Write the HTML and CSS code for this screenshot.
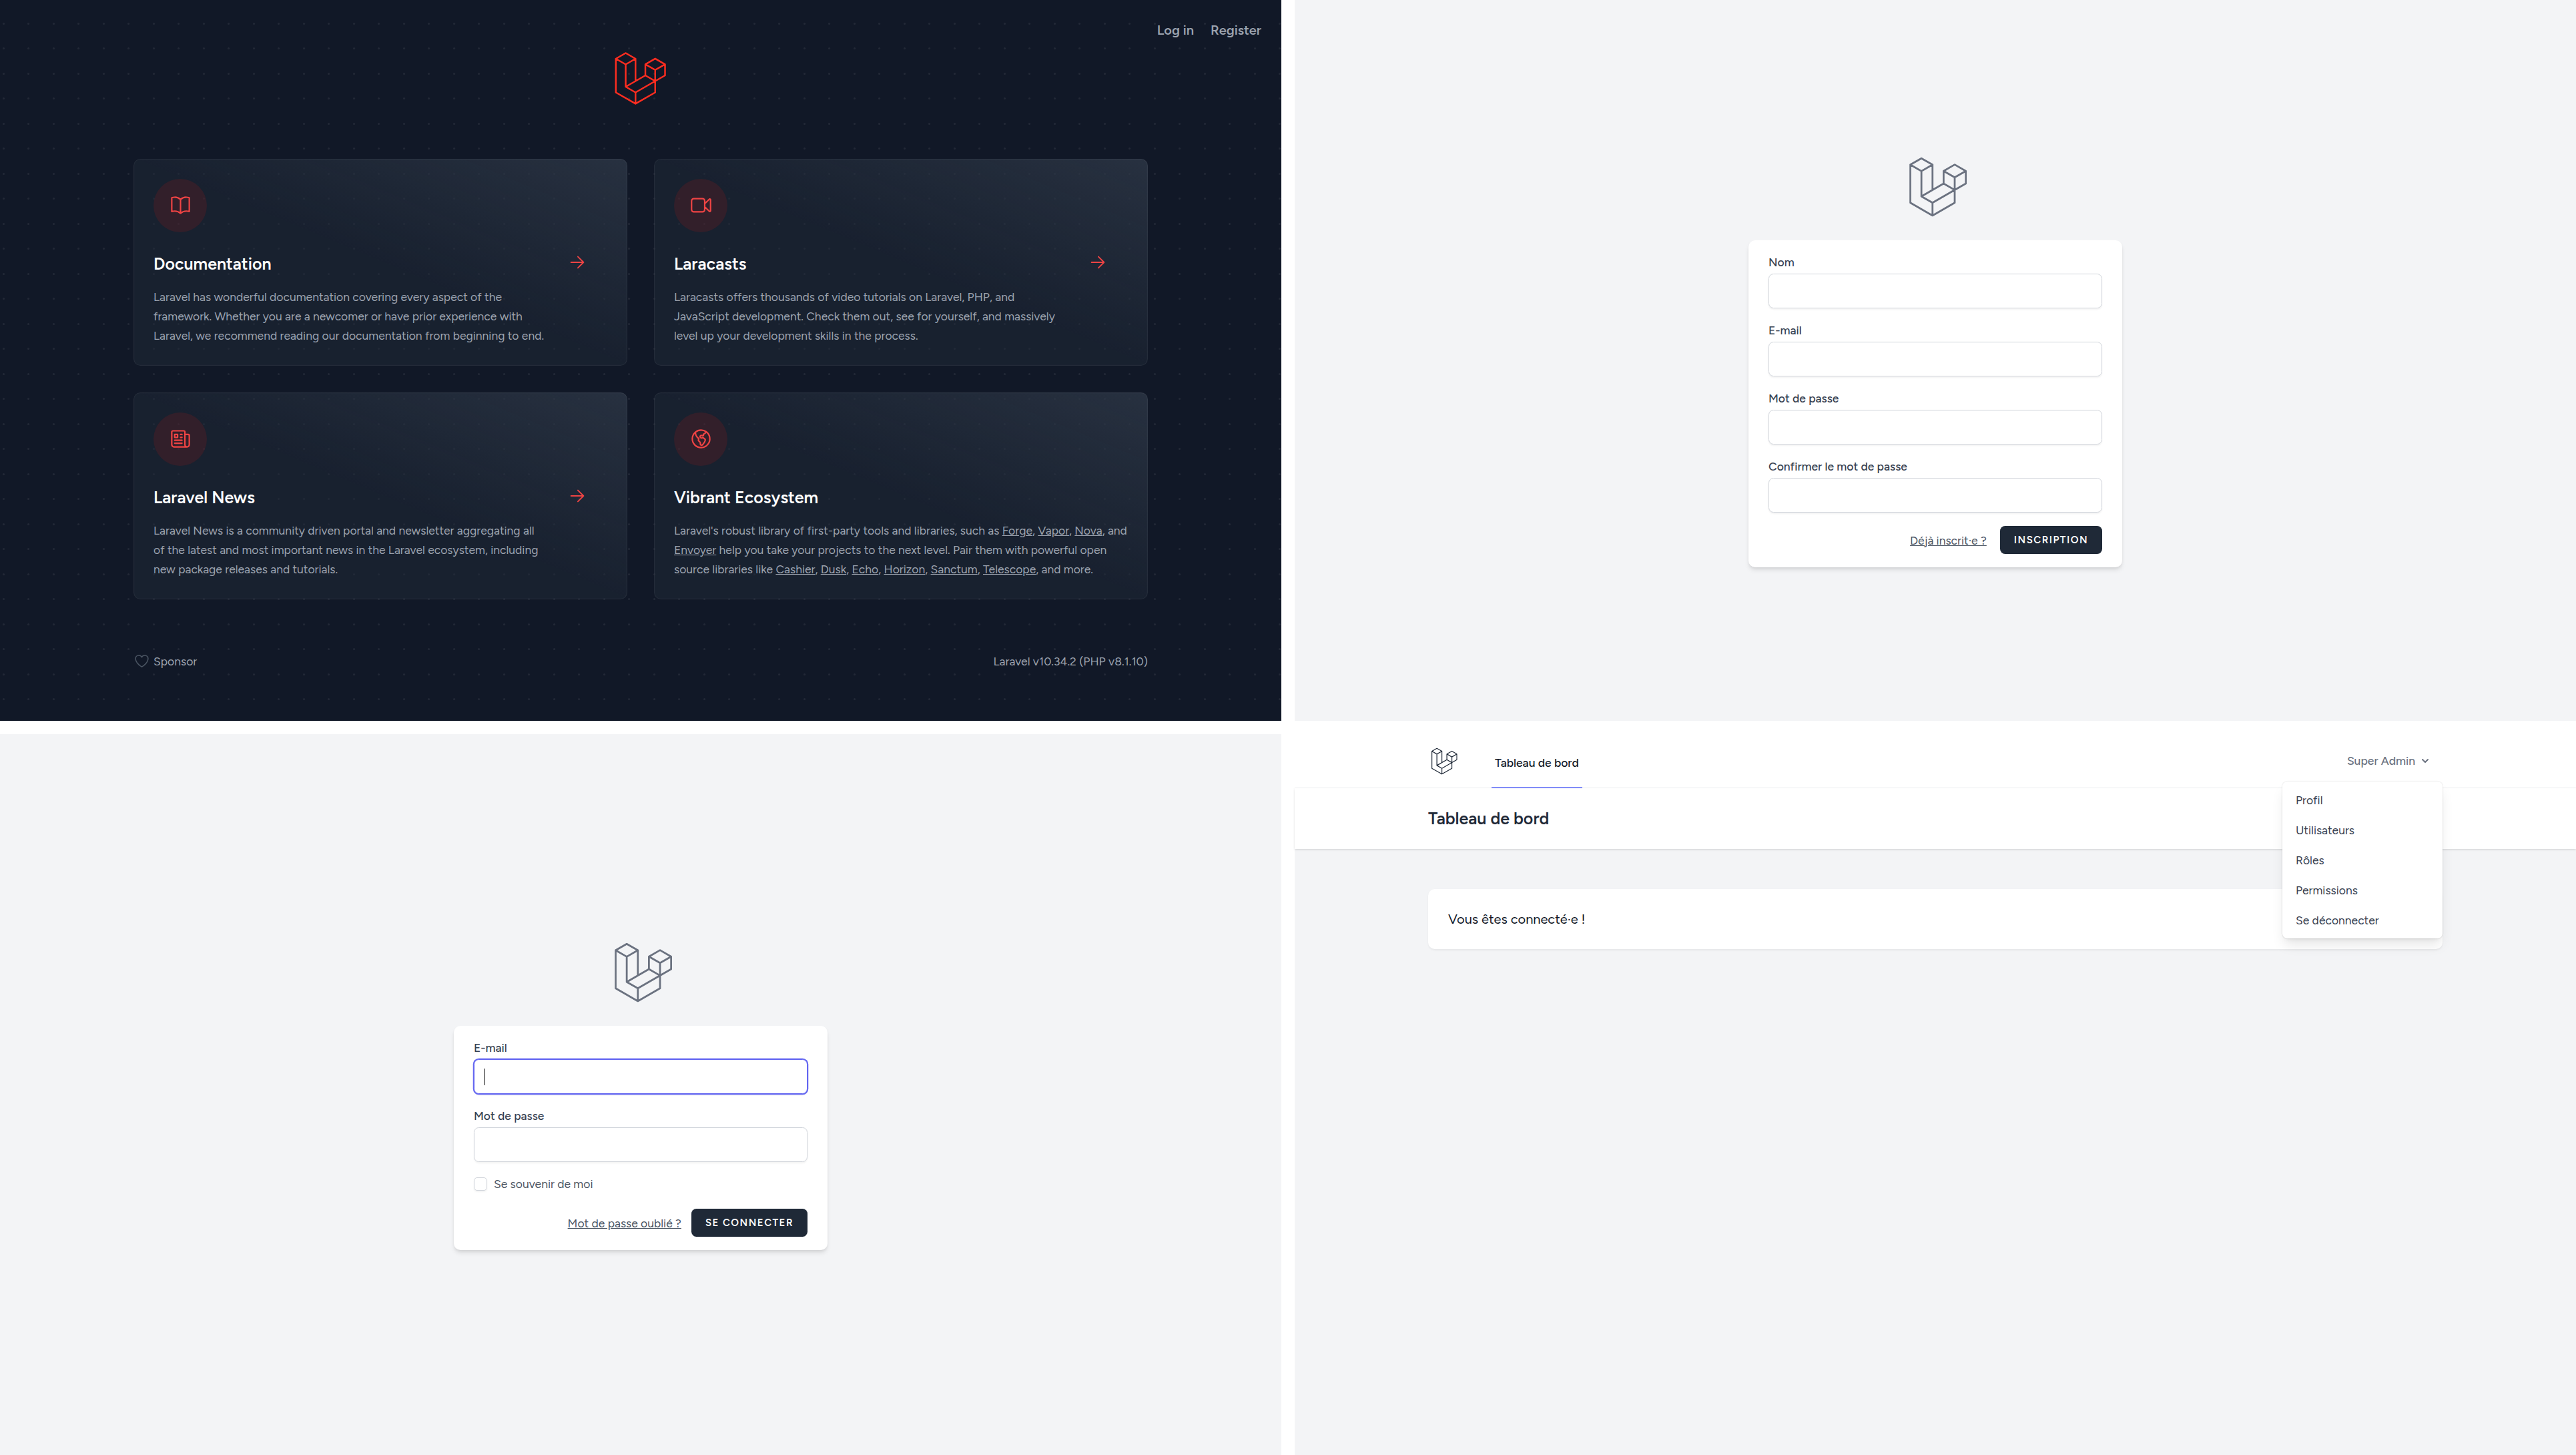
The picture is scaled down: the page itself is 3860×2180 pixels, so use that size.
FILE: index.html
```html
<!DOCTYPE html>
<html lang="fr">
<head>
  <meta charset="utf-8">
  <meta name="viewport" content="width=device-width, initial-scale=1">
  <title>Laravel</title>
  <link rel="stylesheet" href="styles.css">
</head>
<body>
  <svg class="sprite" aria-hidden="true">
    <symbol id="laravel" viewBox="0 0 62 65">
      <path fill="none" stroke="currentColor" stroke-width="2" stroke-linejoin="round" stroke-linecap="round" d="M1 8.11 12.98 1.21 24.95 8.11 12.98 15 1 8.11V49.13L24.95 62.92 48.9 49.13V21.8M12.98 15V42.24L24.95 49.13V62.92M24.95 8.11V35.35M12.98 42.24 36.92 28.45M24.95 49.13 60.88 28.45V14.89L48.9 8 36.92 14.89V28.45L48.9 35.35M36.92 14.89 48.9 21.78 60.88 14.89"/>
    </symbol>
  </svg>

  <div class="gallery">
    <section class="screen welcome">
      <nav class="welcome-nav">
        <a href="#login">Log in</a>
        <a href="#register">Register</a>
      </nav>
      <div class="welcome-inner">
        <svg class="welcome-logo" role="img" aria-label="Laravel"><use href="#laravel"/></svg>

        <div class="cards">
          <a class="card" href="#documentation">
            <div>
              <span class="card-icon"><svg viewBox="0 0 24 24"><path d="M12 6.042A8.967 8.967 0 006 3.75c-1.052 0-2.062.18-3 .512v14.25A8.987 8.987 0 016 18c2.305 0 4.408.867 6 2.292m0-14.25a8.966 8.966 0 016-2.292c1.052 0 2.062.18 3 .512v14.25A8.987 8.987 0 0018 18a8.967 8.967 0 00-6 2.292m0-14.25v14.25"/></svg></span>
              <h2>Documentation</h2>
              <p>Laravel has wonderful documentation covering every aspect of the framework. Whether you are a newcomer or have prior experience with Laravel, we recommend reading our documentation from beginning to end.</p>
            </div>
            <svg class="arrow" viewBox="0 0 24 24"><path d="M4.5 12h15m0 0l-6.75-6.75M19.5 12l-6.75 6.75"/></svg>
          </a>

          <a class="card" href="#laracasts">
            <div>
              <span class="card-icon"><svg viewBox="0 0 24 24"><path d="M15.75 10.5l4.72-4.72a.75.75 0 011.28.53v11.38a.75.75 0 01-1.28.53l-4.72-4.72M4.5 18.75h9a2.25 2.25 0 002.25-2.25v-9a2.25 2.25 0 00-2.25-2.25h-9A2.25 2.25 0 002.25 7.5v9a2.25 2.25 0 002.25 2.25z"/></svg></span>
              <h2>Laracasts</h2>
              <p>Laracasts offers thousands of video tutorials on Laravel, PHP, and JavaScript development. Check them out, see for yourself, and massively level up your development skills in the process.</p>
            </div>
            <svg class="arrow" viewBox="0 0 24 24"><path d="M4.5 12h15m0 0l-6.75-6.75M19.5 12l-6.75 6.75"/></svg>
          </a>

          <a class="card" href="#news">
            <div>
              <span class="card-icon"><svg viewBox="0 0 24 24"><path d="M12 7.5h1.5m-1.5 3h1.5m-7.5 3h7.5m-7.5 3h7.5m3-9h3.375c.621 0 1.125.504 1.125 1.125V18a2.25 2.25 0 01-2.25 2.25M16.5 7.5V18a2.25 2.25 0 002.25 2.25M16.5 7.5V4.875c0-.621-.504-1.125-1.125-1.125H4.125C3.504 3.75 3 4.254 3 4.875V18a2.25 2.25 0 002.25 2.25h13.5M6 7.5h3v3H6v-3z"/></svg></span>
              <h2>Laravel News</h2>
              <p>Laravel News is a community driven portal and newsletter aggregating all of the latest and most important news in the Laravel ecosystem, including new package releases and tutorials.</p>
            </div>
            <svg class="arrow" viewBox="0 0 24 24"><path d="M4.5 12h15m0 0l-6.75-6.75M19.5 12l-6.75 6.75"/></svg>
          </a>

          <div class="card">
            <div>
              <span class="card-icon"><svg viewBox="0 0 24 24"><path d="M6.115 5.19l.319 1.913A6 6 0 008.11 10.36L9.75 12l-.387.775c-.217.433-.132.956.21 1.298l1.348 1.348c.21.21.329.497.329.795v1.089c0 .426.24.815.622 1.006l.153.076c.433.217.956.132 1.298-.21l.723-.723a8.7 8.7 0 002.288-4.042 1.087 1.087 0 00-.358-1.099l-1.33-1.108c-.251-.21-.582-.299-.905-.245l-1.17.195a1.125 1.125 0 01-.98-.314l-.295-.295a1.125 1.125 0 010-1.591l.13-.132a1.125 1.125 0 011.3-.21l.603.302a.809.809 0 001.086-1.086L14.25 7.5l1.256-.837a4.5 4.5 0 001.528-1.732l.146-.292M6.115 5.19A9 9 0 1017.18 4.64M6.115 5.19A8.965 8.965 0 0112 3c1.929 0 3.716.607 5.18 1.64"/></svg></span>
              <h2>Vibrant Ecosystem</h2>
              <p>Laravel's robust library of first-party tools and libraries, such as <a href="#forge">Forge</a>, <a href="#vapor">Vapor</a>, <a href="#nova">Nova</a>, and <a href="#envoyer">Envoyer</a> help you take your projects to the next level. Pair them with powerful open source libraries like <a href="#cashier">Cashier</a>, <a href="#dusk">Dusk</a>, <a href="#echo">Echo</a>, <a href="#horizon">Horizon</a>, <a href="#sanctum">Sanctum</a>, <a href="#telescope">Telescope</a>, and more.</p>
            </div>
          </div>
        </div>

        <footer class="welcome-footer">
          <a class="sponsor" href="#sponsor">
            <svg viewBox="0 0 24 24"><path d="M21 8.25c0-2.485-2.099-4.5-4.688-4.5-1.935 0-3.597 1.126-4.312 2.733-.715-1.607-2.377-2.733-4.313-2.733C5.1 3.75 3 5.765 3 8.25c0 7.22 9 12 9 12s9-4.78 9-12z"/></svg>
            Sponsor
          </a>
          <span>Laravel v10.34.2 (PHP v8.1.10)</span>
        </footer>
      </div>
    </section>

    <section class="screen guest" id="register">
      <a class="guest-logo" href="#home" aria-label="Laravel"><svg viewBox="-8 -4 72 72"><use href="#laravel" width="62" height="65"/></svg></a>
      <form class="panel">
        <div class="field">
          <label for="name">Nom</label>
          <input id="name" type="text">
        </div>
        <div class="field">
          <label for="reg-email">E-mail</label>
          <input id="reg-email" type="email">
        </div>
        <div class="field">
          <label for="reg-password">Mot de passe</label>
          <input id="reg-password" type="password">
        </div>
        <div class="field">
          <label for="reg-confirm">Confirmer le mot de passe</label>
          <input id="reg-confirm" type="password">
        </div>
        <div class="actions">
          <a href="#login">Déjà inscrit·e ?</a>
          <button type="button">Inscription</button>
        </div>
      </form>
    </section>

    <section class="screen guest" id="login">
      <a class="guest-logo" href="#home" aria-label="Laravel"><svg viewBox="-8 -4 72 72"><use href="#laravel" width="62" height="65"/></svg></a>
      <form class="panel">
        <div class="field">
          <label for="email">E-mail</label>
          <input class="is-focused" id="email" type="email">
        </div>
        <div class="field">
          <label for="password">Mot de passe</label>
          <input id="password" type="password">
        </div>
        <div class="remember">
          <input id="remember" type="checkbox">
          <label for="remember">Se souvenir de moi</label>
        </div>
        <div class="actions actions-tight">
          <a href="#forgot">Mot de passe oublié ?</a>
          <button type="button">Se connecter</button>
        </div>
      </form>
    </section>

    <section class="screen dashboard">
      <nav class="app-nav">
        <div class="container app-nav-row">
          <a class="app-logo" href="#home" aria-label="Laravel"><svg viewBox="-8 -4 72 72"><use href="#laravel" width="62" height="65"/></svg></a>
          <a class="app-link" href="#dashboard">Tableau de bord</a>
          <div class="dropdown">
            <button class="dropdown-trigger" type="button" aria-expanded="true">
              Super Admin
              <svg viewBox="0 0 20 20"><path fill-rule="evenodd" d="M5.293 7.293a1 1 0 011.414 0L10 10.586l3.293-3.293a1 1 0 111.414 1.414l-4 4a1 1 0 01-1.414 0l-4-4a1 1 0 010-1.414z"/></svg>
            </button>
            <div class="dropdown-menu">
              <a href="#profile">Profil</a>
              <a href="#users">Utilisateurs</a>
              <a href="#roles">Rôles</a>
              <a href="#permissions">Permissions</a>
              <a href="#logout">Se déconnecter</a>
            </div>
          </div>
        </div>
      </nav>
      <header class="app-header">
        <h2 class="container">Tableau de bord</h2>
      </header>
      <main class="container app-main">
        <div class="notice">Vous êtes connecté·e !</div>
      </main>
    </section>
  </div>
</body>
</html>
```
FILE: styles.css
```css
*,
*::before,
*::after {
  box-sizing: border-box;
}

body {
  margin: 0;
  background: #fff;
  font-family: Figtree, Lato, sans-serif;
}

h2,
p {
  margin: 0;
}

a {
  color: inherit;
  text-decoration: none;
}

svg {
  display: block;
}

.sprite {
  position: absolute;
  width: 0;
  height: 0;
}

/* Four screens, two by two */
.gallery {
  display: grid;
  grid-template-columns: repeat(2, minmax(0, 1fr));
  grid-auto-rows: 1fr;
  gap: 20px;
  min-height: 100vh;
}

.screen {
  zoom: 1.25;
  position: relative;
  font-size: 16px;
  line-height: 24px;
}

/* Welcome */
.welcome {
  display: flex;
  align-items: center;
  justify-content: center;
  background-color: #111827;
  background-image: url("data:image/svg+xml,%3Csvg xmlns='http://www.w3.org/2000/svg' width='30' height='30' viewBox='0 0 30 30'%3E%3Ccircle cx='1.227' cy='1.227' r='1.227' fill='rgba(255,255,255,0.07)'/%3E%3C/svg%3E");
  background-position: center;
}

.welcome-nav {
  position: absolute;
  top: 0;
  right: 0;
  display: flex;
  gap: 20px;
  padding: 24px;
  color: #9ca3af;
  font-weight: 600;
}

.welcome-inner {
  width: 100%;
  max-width: 1280px;
  padding: 32px;
}

.welcome-logo {
  width: 62px;
  height: 64px;
  margin: 0 auto;
  color: #ff2d20;
}

.cards {
  display: grid;
  grid-template-columns: repeat(2, minmax(0, 1fr));
  gap: 32px;
  margin-top: 64px;
}

.card {
  display: flex;
  padding: 24px;
  border-radius: 8px;
  background-color: rgba(31, 41, 55, 0.5);
  background-image: linear-gradient(to bottom left, rgba(55, 65, 81, 0.5), transparent, transparent);
  box-shadow: inset 0 0 0 1px rgba(255, 255, 255, 0.05);
}

.card-icon {
  display: flex;
  align-items: center;
  justify-content: center;
  width: 64px;
  height: 64px;
  border-radius: 50%;
  background: rgba(153, 27, 27, 0.2);
}

.card-icon svg {
  width: 28px;
  height: 28px;
}

.card svg {
  fill: none;
  stroke: #ef4444;
  stroke-width: 1.5;
}

.card-icon path,
.arrow path,
.sponsor path {
  stroke-linecap: round;
  stroke-linejoin: round;
}

.card h2 {
  margin-top: 24px;
  color: #fff;
  font-size: 20px;
  font-weight: 600;
  line-height: 28px;
}

.card p {
  margin-top: 15px;
  color: #9ca3af;
  font-size: 14px;
  line-height: 23px;
}

.card p a {
  text-decoration: underline;
}

.arrow {
  flex-shrink: 0;
  align-self: center;
  width: 24px;
  height: 24px;
  margin: 0 24px;
}

.welcome-footer {
  display: flex;
  align-items: center;
  justify-content: space-between;
  margin-top: 64px;
  color: #9ca3af;
  font-size: 14px;
  line-height: 20px;
}

.sponsor {
  display: flex;
  align-items: center;
  gap: 4px;
}

.sponsor svg {
  width: 20px;
  height: 20px;
  fill: none;
  stroke: #4b5563;
  stroke-width: 1.5;
}

/* Register and log in */
.guest {
  display: flex;
  flex-direction: column;
  align-items: center;
  justify-content: center;
  background: #f3f4f6;
}

.guest-logo svg {
  width: 80px;
  height: 80px;
  color: #6b7280;
}

.panel {
  display: flex;
  flex-direction: column;
  gap: 16px;
  width: 100%;
  max-width: 448px;
  margin-top: 24px;
  padding: 16px 24px;
  border-radius: 8px;
  background: #fff;
  box-shadow: 0 4px 6px -1px rgba(0, 0, 0, 0.1), 0 2px 4px -2px rgba(0, 0, 0, 0.1);
}

.field {
  display: flex;
  flex-direction: column;
  gap: 4px;
}

.field label {
  color: #374151;
  font-size: 14px;
  font-weight: 500;
  line-height: 20px;
}

.field input {
  width: 100%;
  margin: 0;
  padding: 8px 12px;
  border: 1px solid #d1d5db;
  border-radius: 6px;
  background: #fff;
  box-shadow: 0 1px 2px 0 rgba(0, 0, 0, 0.05);
  font: inherit;
  font-size: 16px;
  line-height: 24px;
}

.field .is-focused {
  border-color: #6366f1;
  outline: none;
  background: #fff linear-gradient(#000, #000) 12px center / 1px 20px no-repeat;
  box-shadow: 0 0 0 1px #6366f1, 0 1px 2px 0 rgba(0, 0, 0, 0.05);
  caret-color: transparent;
}

.remember {
  display: flex;
  align-items: center;
  gap: 8px;
  padding-bottom: 4px;
  color: #4b5563;
  font-size: 14px;
  line-height: 20px;
}

.remember input {
  appearance: none;
  width: 16px;
  height: 16px;
  margin: 0;
  border: 1px solid #d1d5db;
  border-radius: 4px;
  background: #fff;
  box-shadow: 0 1px 2px 0 rgba(0, 0, 0, 0.05);
}

.actions {
  display: flex;
  align-items: center;
  justify-content: flex-end;
  gap: 16px;
}

.actions-tight {
  gap: 12px;
}

.actions a {
  color: #4b5563;
  font-size: 14px;
  line-height: 20px;
  text-decoration: underline;
}

.actions button {
  padding: 8px 16px;
  border: 1px solid transparent;
  border-radius: 6px;
  background: #1f2937;
  color: #fff;
  font: inherit;
  font-size: 12px;
  font-weight: 600;
  line-height: 16px;
  letter-spacing: 0.1em;
  text-transform: uppercase;
}

/* Dashboard */
.dashboard {
  background: #f3f4f6;
}

.container {
  width: 100%;
  max-width: 1280px;
  margin: 0 auto;
  padding-right: 32px;
  padding-left: 32px;
}

.app-nav {
  border-bottom: 1px solid #f3f4f6;
  background: #fff;
}

.app-nav-row {
  display: flex;
  align-items: center;
  height: 64px;
}

.app-logo svg {
  width: 36px;
  height: 36px;
  color: #1f2937;
}

.app-link {
  display: flex;
  align-items: center;
  align-self: stretch;
  margin: 0 auto -1px 40px;
  padding: 4px 4px 0;
  border-bottom: 2px solid #818cf8;
  color: #111827;
  font-size: 14px;
  font-weight: 500;
  line-height: 20px;
}

.dropdown {
  position: relative;
}

.dropdown-trigger {
  display: flex;
  align-items: center;
  gap: 4px;
  padding: 8px 12px;
  border: 1px solid transparent;
  border-radius: 6px;
  background: #fff;
  color: #6b7280;
  font: inherit;
  font-size: 14px;
  font-weight: 500;
  line-height: 16px;
}

.dropdown-trigger svg {
  width: 16px;
  height: 16px;
  fill: currentColor;
}

.dropdown-menu {
  position: absolute;
  z-index: 1;
  top: 100%;
  right: 0;
  width: 192px;
  margin-top: 8px;
  padding: 4px 0;
  border-radius: 6px;
  background: #fff;
  box-shadow: 0 0 0 1px rgba(0, 0, 0, 0.05), 0 10px 15px -3px rgba(0, 0, 0, 0.1), 0 4px 6px -4px rgba(0, 0, 0, 0.1);
}

.dropdown-menu a {
  display: block;
  padding: 8px 16px;
  color: #374151;
  font-size: 14px;
  line-height: 20px;
}

.app-header {
  padding: 24px 0;
  background: #fff;
  box-shadow: 0 1px 3px 0 rgba(0, 0, 0, 0.1), 0 1px 2px -1px rgba(0, 0, 0, 0.1);
}

.app-header h2 {
  color: #1f2937;
  font-size: 20px;
  font-weight: 600;
  line-height: 25px;
}

.app-main {
  padding-top: 48px;
  padding-bottom: 48px;
}

.notice {
  padding: 24px;
  border-radius: 8px;
  background: #fff;
  box-shadow: 0 1px 2px 0 rgba(0, 0, 0, 0.05);
  color: #111827;
}
```
